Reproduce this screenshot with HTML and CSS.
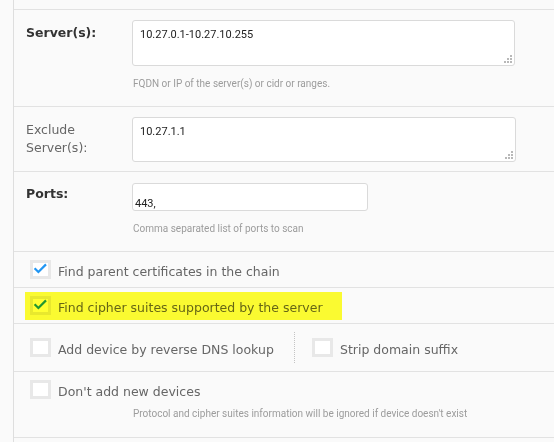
FILE: index.html
```html
<!DOCTYPE html>
<html>
<head>
<meta charset="utf-8">
<link rel="stylesheet" href="styles.css">
</head>
<body>
<div class="panel">
  <div class="frow r1">
    <label class="flabel strong">Server(s):</label>
    <div class="fctl">
      <div class="ta-wrap">
        <textarea class="ta ta1">10.27.0.1-10.27.10.255</textarea>
        <svg class="grip" width="8" height="8" viewBox="0 0 8 8"><rect x="6" y="0" width="2" height="2"/><rect x="3" y="3" width="2" height="2"/><rect x="6" y="3" width="2" height="2"/><rect x="0" y="6" width="2" height="2"/><rect x="3" y="6" width="2" height="2"/><rect x="6" y="6" width="2" height="2"/></svg>
      </div>
      <div class="help">FQDN or IP of the server(s) or cidr or ranges.</div>
    </div>
  </div>

  <div class="frow r2">
    <label class="flabel">Exclude<br>Server(s):</label>
    <div class="fctl">
      <div class="ta-wrap">
        <textarea class="ta ta2">10.27.1.1</textarea>
        <svg class="grip" width="8" height="8" viewBox="0 0 8 8"><rect x="6" y="0" width="2" height="2"/><rect x="3" y="3" width="2" height="2"/><rect x="6" y="3" width="2" height="2"/><rect x="0" y="6" width="2" height="2"/><rect x="3" y="6" width="2" height="2"/><rect x="6" y="6" width="2" height="2"/></svg>
      </div>
    </div>
  </div>

  <div class="frow r3">
    <label class="flabel strong ports">Ports:</label>
    <div class="fctl">
      <input class="inp" type="text" value="443,">
      <div class="help">Comma separated list of ports to scan</div>
    </div>
  </div>

  <div class="crow">
    <span class="cb"><svg class="tick" width="15" height="13" viewBox="0 0 15 13"><path d="M1.6 5.2 L5.4 9 L13 1.4"/></svg></span>
    <span class="clabel">Find parent certificates in the chain</span>
  </div>

  <div class="crow hl-row">
    <span class="cb"><svg class="tick" width="15" height="13" viewBox="0 0 15 13"><path d="M1.6 5.2 L5.4 9 L13 1.4"/></svg></span>
    <span class="clabel">Find cipher suites supported by the server</span>
    <span class="highlight"></span>
  </div>

  <div class="crow tall">
    <div class="opt first">
      <span class="cb"></span>
      <span class="clabel">Add device by reverse DNS lookup</span>
    </div>
    <span class="vsep"></span>
    <div class="opt second">
      <span class="cb"></span>
      <span class="clabel">Strip domain suffix</span>
    </div>
  </div>

  <div class="crow last">
    <div class="opt">
      <span class="cb"></span>
      <span class="clabel">Don't add new devices</span>
    </div>
    <div class="help note">Protocol and cipher suites information will be ignored if device doesn't exist</div>
  </div>
</div>
</body>
</html>
```

FILE: styles.css
```css
html, body {
  margin: 0;
  padding: 0;
  background: #fafafa;
}

.panel {
  margin-left: 13px;
  border-left: 1px solid #dedede;
  padding-top: 9px;
  min-height: 433px;
  font-family: "DejaVu Sans", Verdana, sans-serif;
}

.frow {
  display: grid;
  grid-template-columns: 106px 383px;
  align-items: start;
  padding-left: 12px;
  border-top: 1px solid #e2e2e2;
}

.r1 { padding-top: 10px; padding-bottom: 16px; }
.r2 { padding-top: 10px; padding-bottom: 9px; }
.r3 { padding-top: 11px; padding-bottom: 16px; }

.flabel {
  margin-top: 4px;
  font-size: 12.5px;
  line-height: 18px;
  color: #666;
}

.flabel.strong {
  font-weight: bold;
  color: #333;
}

.flabel.ports { margin-top: 2px; }

.fctl {
  display: flex;
  flex-direction: column;
  align-items: flex-start;
}

.ta-wrap {
  position: relative;
  display: block;
}

.ta {
  display: block;
  box-sizing: border-box;
  width: 383px;
  margin: 0;
  padding: 7px 7px;
  border: 1px solid #dadada;
  border-radius: 3px;
  background: #fff;
  font-family: Roboto, "Liberation Sans", sans-serif;
  font-size: 11px;
  color: #222;
  resize: none;
  overflow: hidden;
  outline: none;
}

.ta1 { height: 46px; }
.ta2 { height: 45px; width: 384px; }

.grip {
  position: absolute;
  right: 3px;
  bottom: 3px;
  fill: #b8b8b8;
}

.inp {
  display: block;
  box-sizing: border-box;
  width: 236px;
  height: 28px;
  margin: 0;
  padding: 12px 2px 0;
  border: 1px solid #dadada;
  border-radius: 3px;
  background: #fff;
  font-family: Roboto, "Liberation Sans", sans-serif;
  font-size: 11px;
  line-height: 14px;
  color: #222;
  outline: none;
}

.help {
  margin-top: 12px;
  padding-left: 1px;
  font-family: Roboto, "Liberation Sans", sans-serif;
  font-size: 10px;
  line-height: 12px;
  color: #9c9c9c;
  white-space: nowrap;
}

.crow {
  display: flex;
  align-items: center;
  min-height: 35px;
  padding-left: 16px;
  border-top: 1px solid #e2e2e2;
}

.crow.tall { min-height: 47px; }

.crow.last {
  display: block;
  min-height: 0;
  padding-top: 8px;
  padding-bottom: 17px;
  border-bottom: 1px solid #e2e2e2;
}

.opt {
  display: flex;
  align-items: center;
}

.opt.first { width: 264px; }
.opt.second { margin-left: 17px; }

.cb {
  box-sizing: border-box;
  flex: none;
  width: 21px;
  height: 19px;
  border: 3px solid #e8e8e8;
  background: #fff;
  display: flex;
}

.tick {
  fill: none;
  stroke: #2196f3;
  stroke-width: 2.2;
}

.clabel {
  margin-left: 7px;
  padding-top: 4px;
  font-size: 12.5px;
  line-height: 15px;
  color: #666;
  white-space: nowrap;
}

.vsep {
  flex: none;
  width: 0;
  height: 31px;
  border-left: 1px dotted #c4c4c4;
}

.help.note {
  margin-top: 9px;
  margin-left: 103px;
  padding-left: 0;
}

.hl-row {
  position: relative;
}

.highlight {
  position: absolute;
  left: 11px;
  top: 4px;
  width: 317px;
  height: 28px;
  background: rgb(255, 255, 50);
  mix-blend-mode: multiply;
}
```
